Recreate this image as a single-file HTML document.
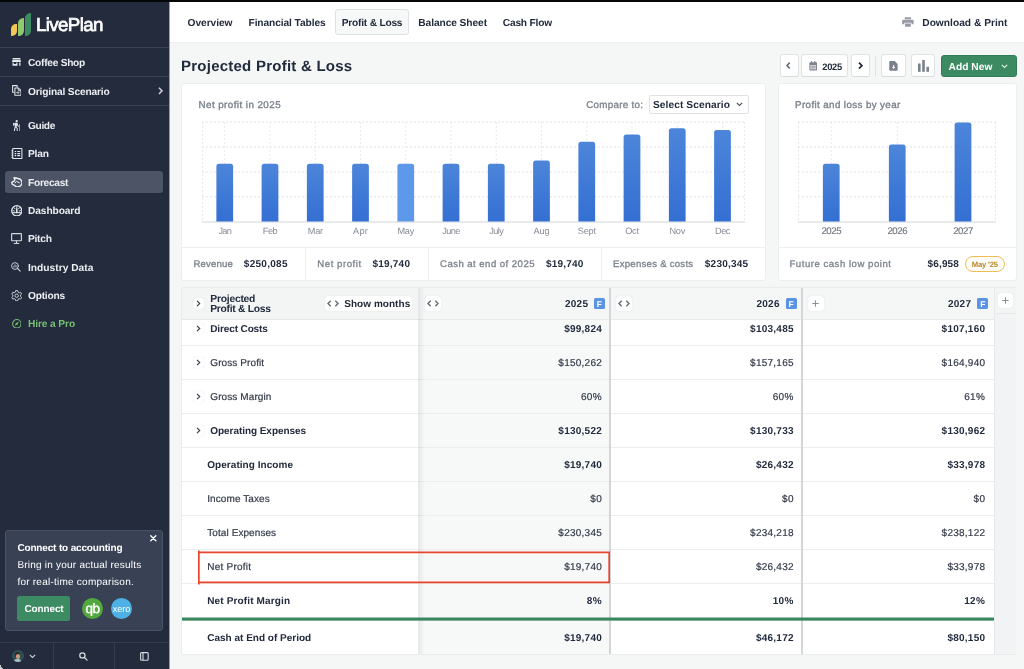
<!DOCTYPE html>
<html lang="en"><head>
<meta charset="utf-8">
<title>LivePlan - Projected Profit &amp; Loss</title>
<style>
*{box-sizing:border-box;margin:0;padding:0}
html,body{width:1024px;height:669px;overflow:hidden}
body{position:relative;background:#f5f7f7;font-family:"Liberation Sans",sans-serif;font-size:10px;color:#222b3d;text-rendering:geometricPrecision}
#app{position:absolute;left:0;top:0;width:1024px;height:669px;will-change:transform}
.a{position:absolute}
.t{position:absolute;white-space:pre;line-height:14px;height:14px;margin-top:-6px}
.b{font-weight:700}
.r{text-align:right}
.g{color:#7b828d;-webkit-text-stroke:0.3px #7b828d}
.w{color:#fff}
.sb{font-size:10.2px;color:#eceef2}
#topbar{left:0;top:0;width:1024px;height:2px;background:#050608}
#side{left:0;top:2px;width:169px;height:667px;background:#232b3d;border-right:0}
#side2{left:169px;top:2px;width:1px;height:667px;background:rgba(35,43,61,.45)}
#nav{left:169px;top:2px;width:855px;height:41px;background:#fff;border-bottom:1px solid #eceeef}
.sline{left:0;width:169px;height:1px;background:#3a4256}
.btn{position:absolute;background:#fff;border:1px solid #e0e3e5;border-radius:3px}
.card{position:absolute;background:#fff;border:1px solid #eceeef;border-radius:3px}
.hl{position:absolute;height:1px;background:#eceeef}
.vl{position:absolute;width:1px;background:#eceeef}
.mini{position:absolute;background:#fff;border-radius:3px;box-shadow:0 0 1px rgba(0,0,0,.18)}
</style>
</head>
<body>
<div id="app">
<div class="a" id="nav"></div>
<div class="a" id="side"></div>
<div class="a" id="side2"></div>
<div class="a" id="topbar"></div>
<!--SIDEBAR-START-->
<!-- logo -->
<div class="a" style="left:10.7px;top:24px;width:6px;height:11.6px;background:#f3c655;border-radius:5px 0 5px 0"></div>
<div class="a" style="left:17.7px;top:18px;width:6.2px;height:17.6px;background:#8fca6e;border-radius:5.5px 0 5.5px 0"></div>
<div class="a" style="left:24.9px;top:12.7px;width:6.2px;height:22.9px;background:#3c8a62;border-radius:5.5px 0 5.5px 0"></div>
<span class="t w" style="left: 36px; top: 24.8px; font-size: 18.7px; line-height: 24px; height: 24px; margin-top: -12px; -webkit-text-stroke: 0.7px rgb(255, 255, 255); letter-spacing: -0.61px;">LivePlan</span>
<div class="a sline" style="top:47px"></div>
<div class="a sline" style="top:76px"></div>
<div class="a sline" style="top:105px"></div>
<!-- company / scenario -->
<svg class="a" style="left:12.200px;top:58px" width="9" height="7.700" viewBox="0 0 9 7.700"><path fill="#e3e6ea" d="M0.600 0h7.800v1.100H0.600zM0.500 1.600h8L9 4H0zM0.500 4.400h1.200v1.700h2.600V4.400h1.200v3.300H0.500zM7.200 4.400h1.300v3.300H7.200z"></path></svg>
<span class="t b w sb" style="left: 28px; top: 62.5px; letter-spacing: -0.27px;">Coffee Shop</span>
<svg class="a" style="left:11.800px;top:85px" width="9.600" height="10.800" viewBox="0 0 9.600 10.800" fill="none" stroke="#e3e6ea" stroke-width="1.050" stroke-linejoin="round"><path d="M2.600 7.300H0.600V0.600h4.600v2"></path><path d="M2.900 3h3.600l2.500 2.500v4.700H2.900z"></path><path d="M6.300 3v2.700H9" stroke-width="0.900"></path><path d="M4.300 7.600h2.500M5.900 6.500L7 7.600 5.900 8.700" stroke-width="0.900"></path></svg>
<span class="t b w sb" style="left: 28px; top: 91.6px; letter-spacing: -0.17px;">Original Scenario</span>
<svg class="a" style="left:157.700px;top:86.800px" width="5" height="7.800" viewBox="0 0 6 10" fill="none" stroke="#c9cdd4" stroke-width="1.900"><path d="M1 1l4 4-4 4"></path></svg>
<!-- nav highlight -->
<div class="a" style="left:5px;top:171px;width:158px;height:22.4px;background:#4d5465;border-radius:3px"></div>
<!-- Guide (hiker) -->
<svg class="a" style="left:12.200px;top:120px" width="8.200" height="11" viewBox="0 0 8.200 11" fill="#e3e6ea"><circle cx="4.700" cy="1.150" r="1.150"></circle><path d="M3.300 2.800h2.300l0.500 2.500 1.100 0.900-0.500 0.700-1.500-1.100-0.200-0.800-0.400 1.900 1.100 1.300v2.800h-1v-2.400L3.600 7.400 2.900 11H1.800l1.200-5.800V4l-0.700 0.500v1.400H1.500V4z"></path><path d="M7.100 4.300h0.700V11h-0.700z" opacity="0.850"></path><path d="M0.900 3.300l1.400-0.500 0.300 2.300-1.300 0.500z"></path></svg>
<span class="t b w sb" style="left: 28px; top: 126.3px; letter-spacing: -0.37px;">Guide</span>
<!-- Plan (notebook) -->
<svg class="a" style="left:11px;top:148px" width="11.500" height="11.200" viewBox="0 0 11.500 11.200" fill="none" stroke="#e3e6ea" stroke-width="1.050"><rect x="1.700" y="0.550" width="9.200" height="10.100" rx="0.400"></rect><path d="M0.200 2.300h1.900M0.200 4.100h1.900M0.200 5.900h1.900M0.200 7.700h1.900M0.200 9.500h1.900" stroke-width="0.700"></path><path d="M3.700 3.500h1.500M3.700 5.600h1.500M3.700 7.700h1.500M6.300 3.500h2.800M6.300 5.600h2.800M6.300 7.700h2.800" stroke-width="1.150"></path></svg>
<span class="t b w sb" style="left: 28px; top: 154.1px; letter-spacing: -0.18px;">Plan</span>
<!-- Forecast (piggy bank) -->
<svg class="a" style="left:10.700px;top:176.800px" width="11.800" height="10.600" viewBox="0 0 11.800 10.600" fill="none" stroke="#eef0f3" stroke-width="1.400" stroke-linejoin="round" stroke-linecap="round"><path d="M3 0.800C4.500 0.600 5.600 1 6.800 1.550A4.150 4.150 0 1 1 3.600 8.350L1.300 7.400 0.800 5.300 3 4.200 3.900 2.800Z"></path><path d="M5.600 4.400l2.700 1.300" stroke-width="1"></path><circle cx="4.200" cy="5.400" r="0.300" stroke-width="0.700"></circle></svg>
<span class="t b w sb" style="left: 28px; top: 182.9px; letter-spacing: -0.28px;">Forecast</span>
<!-- Dashboard -->
<svg class="a" style="left:10.700px;top:204.500px" width="11.600" height="11.600" viewBox="0 0 11.600 11.600" fill="none" stroke="#e3e6ea" stroke-width="1.250"><circle cx="5.800" cy="5.800" r="5.100"></circle><path d="M1.300 7.700h9" stroke-width="1.100"></path><path d="M5.800 7.500V3.800" stroke-width="1.600" stroke-linecap="round"></path><path d="M5.800 1.700v0.900M3.200 2.800l0.900 1.100M8.400 2.800L7.500 3.900M2 5.600l1.300 0.400M9.600 5.600L8.300 6" stroke-width="1" stroke-linecap="round"></path></svg>
<span class="t b w sb" style="left: 28px; top: 211.3px; letter-spacing: -0.1px;">Dashboard</span>
<!-- Pitch (monitor) -->
<svg class="a" style="left:11px;top:233.200px" width="11" height="11.200" viewBox="0 0 11 11.200" fill="none" stroke="#d3d7dd" stroke-width="1.150" stroke-linejoin="round"><rect x="0.600" y="0.600" width="9.800" height="7.200" rx="0.500"></rect><path d="M5.500 7.900v2.300M3.200 10.500h4.600" stroke-linecap="round"></path></svg>
<span class="t b w sb" style="left: 28px; top: 239.2px; letter-spacing: -0.26px;">Pitch</span>
<!-- Industry Data (search chart) -->
<svg class="a" style="left:11.400px;top:262.400px" width="9.800" height="9.600" viewBox="0 0 9.800 9.600" fill="none" stroke="#c9cdd5" stroke-width="1" stroke-linecap="round"><circle cx="4" cy="4" r="3.400"></circle><path d="M6.500 6.500l2.700 2.600" stroke-width="1.100"></path><path d="M2.800 5V4.200M4 5V2.700M5.200 5V3.700" stroke-width="0.800"></path></svg>
<span class="t b w sb" style="left: 28px; top: 267.9px; letter-spacing: 0.02px;">Industry Data</span>
<!-- Options (gear) -->
<svg class="a" style="left:10.800px;top:289.700px" width="11.400" height="11.400" viewBox="0 0 11.400 11.400" fill="none" stroke="#c5c9d2" stroke-width="1" stroke-linejoin="round"><path d="M4.44 2.01 L4.67 0.60 L6.73 0.60 L6.96 2.01 L8.26 2.76 L9.60 2.26 L10.63 4.05 L9.53 4.95 L9.53 6.45 L10.63 7.35 L9.60 9.14 L8.26 8.64 L6.96 9.39 L6.73 10.80 L4.67 10.80 L4.44 9.39 L3.14 8.64 L1.80 9.14 L0.77 7.35 L1.87 6.45 L1.87 4.95 L0.77 4.05 L1.80 2.26 L3.14 2.76Z"></path><circle cx="5.700" cy="5.700" r="1.700"></circle></svg>
<span class="t b w sb" style="left: 28px; top: 296px; letter-spacing: -0.24px;">Options</span>
<!-- Hire a Pro (compass) -->
<svg class="a" style="left:11.700px;top:318.900px" width="9.600" height="9.600" viewBox="0 0 9.600 9.600" fill="none" stroke="#72bb6f" stroke-width="1.050"><circle cx="4.800" cy="4.800" r="4.200"></circle><path d="M6.800 2.800L5.600 5.600 2.800 6.800 4 4z" fill="#72bb6f" stroke="none"></path></svg>
<span class="t b" style="left: 28px; top: 324.2px; color: rgb(120, 192, 116); font-size: 10.2px; letter-spacing: -0.11px;">Hire a Pro</span>
<!-- Connect card -->
<div class="a" style="left:5px;top:530px;width:158px;height:100.500px;background:#394255;border:1px solid #4a5366;border-radius:3px"></div>
<svg class="a" style="left:150.400px;top:535.300px" width="6.600" height="6.600" viewBox="0 0 7 7" stroke="#fff" stroke-width="1.400" stroke-linecap="round"><path d="M0.800 0.800l5.400 5.400M6.200 0.800L0.800 6.200"></path></svg>
<span class="t b w" style="left: 17.4px; top: 548.4px; letter-spacing: -0.16px;">Connect to accounting</span>
<span class="t w" style="left: 17.4px; top: 565.4px; letter-spacing: 0.22px;">Bring in your actual results</span>
<span class="t w" style="left: 17.4px; top: 582.3px; letter-spacing: 0.24px;">for real-time comparison.</span>
<div class="a" style="left:17.200px;top:595.700px;width:53.300px;height:25.500px;background:#3d8b63;border-radius:2.500px"></div>
<span class="t b w" style="left: 24.5px; top: 609.3px; letter-spacing: -0.14px;">Connect</span>
<div class="a" style="left:82px;top:598px;width:21px;height:21px;border-radius:50%;background:#52a83c"></div>
<span class="t w" style="left:82px;top:607.600px;width:21px;text-align:center;font-size:13.500px;letter-spacing:-0.500px;-webkit-text-stroke:0.400px #fff">qb</span>
<div class="a" style="left:111px;top:598px;width:21px;height:21px;border-radius:50%;background:#4eb1e6"></div>
<span class="t w" style="left:110.500px;top:608.200px;width:22px;text-align:center;font-size:9.200px;letter-spacing:-0.150px">xero</span>
<!-- footer -->
<div class="a" style="left:0;top:642px;width:169px;height:1px;background:#333b4e"></div>
<div class="a" style="left:53px;top:642px;width:1px;height:27px;background:#333b4e"></div>
<div class="a" style="left:114px;top:642px;width:1px;height:27px;background:#333b4e"></div>
<div class="a" style="left:12px;top:650.300px;width:11.600px;height:11.600px;border-radius:50%;overflow:hidden;background:#2f4f55"><div class="a" style="left:2.300px;top:8.300px;width:7px;height:5px;border-radius:3px 3px 0 0;background:#a9c3c9"></div><div class="a" style="left:3.100px;top:1.600px;width:5.400px;height:5px;border-radius:2.700px;background:#2b2624"></div><div class="a" style="left:3.500px;top:3.400px;width:4.600px;height:5.200px;border-radius:2.300px;background:#c99a7c"></div></div>
<svg class="a" style="left:29px;top:654.300px" width="7" height="5" viewBox="0 0 7 5" fill="none" stroke="#cdd1d9" stroke-width="1.100"><path d="M0.800 0.800l2.700 2.700 2.700-2.700"></path></svg>
<svg class="a" style="left:79.300px;top:652.400px" width="8.800" height="8.800" viewBox="0 0 8.800 8.800" fill="none" stroke="#d9dce3" stroke-width="1.250" stroke-linecap="round"><circle cx="3.400" cy="3.400" r="2.600"></circle><path d="M5.500 5.500l2.600 2.600"></path></svg>
<svg class="a" style="left:139.900px;top:652.300px" width="8.800" height="8.800" viewBox="0 0 8.800 8.800" fill="none" stroke="#d9dce3" stroke-width="1.100"><rect x="0.600" y="0.600" width="7.600" height="7.600" rx="1"></rect><path d="M3 0.600v7.600"></path></svg>
<!-- window corner -->
<div class="a" style="left:0;top:664.500px;width:4.500px;height:4.500px;background:radial-gradient(circle at 100% 0,rgba(0,0,0,0) 0 3.800px,#c9cdd1 4.400px)"></div>
<!--SIDEBAR-END-->
<!--TOPNAV-START-->
<div class="a" style="left:335px;top:9px;width:74px;height:25.500px;background:#f7f8f8;border:1px solid #dde1e3;border-radius:3px"></div>
<span class="t b" style="left: 187.5px; top: 23px; font-size: 10.2px; letter-spacing: -0.04px;">Overview</span>
<span class="t b" style="left: 248.5px; top: 23px; font-size: 10.2px; letter-spacing: -0.09px;">Financial Tables</span>
<span class="t b" style="left: 341.75px; top: 23px; font-size: 10.2px; letter-spacing: -0.22px;">Profit &amp; Loss</span>
<span class="t b" style="left: 418.25px; top: 23px; font-size: 10.2px; letter-spacing: -0.07px;">Balance Sheet</span>
<span class="t b" style="left: 502.75px; top: 23px; font-size: 10.2px; letter-spacing: -0.19px;">Cash Flow</span>
<svg class="a" style="left:901.800px;top:17px" width="11.800" height="10" viewBox="0 0 13 11" fill="#959ba4"><path d="M3 0.300h7v2.200H3z"></path><path d="M1.400 3h10.200c0.700 0 1.200 0.500 1.200 1.200v3.900h-2.300V6.300H2.500v1.800H0.200V4.200C0.200 3.500 0.700 3 1.400 3z"></path><path d="M3.400 7.100h6.200v3.600H3.400z"></path></svg>
<span class="t b" style="left: 922.25px; top: 23px; font-size: 10.2px; letter-spacing: 0.02px;">Download &amp; Print</span>
<!--TOPNAV-END-->
<!--HEADER-START-->
<span class="t b" style="left: 181px; top: 65.7px; font-size: 15px; line-height: 20px; height: 20px; margin-top: -9px; letter-spacing: 0.24px;">Projected Profit &amp; Loss</span>
<div class="btn" style="left:780px;top:54px;width:18.500px;height:23px;border-bottom-color:#d6dadd"></div>
<svg class="a" style="left:786.400px;top:62.400px" width="4.700" height="7" viewBox="0 0 6 9" fill="none" stroke="#5d6470" stroke-width="1.900"><path d="M4.800 0.800L1.200 4.500l3.600 3.700"></path></svg>
<div class="btn" style="left:801px;top:54px;width:47px;height:23px;border-bottom-color:#d6dadd"></div>
<svg class="a" style="left:809px;top:61.400px" width="8.400" height="9.400" viewBox="0 0 8.400 9.400"><path fill="#7f858f" d="M1.400 1.200h5.600c0.600 0 1 0.400 1 1v6.200c0 0.600-0.400 1-1 1H1.400c-0.600 0-1-0.400-1-1V2.200c0-0.600 0.400-1 1-1z"></path><path fill="#7f858f" d="M2 0h1.100v1.800H2zM5.300 0h1.100v1.800H5.300z"></path><path fill="#dfe1e5" d="M1.400 4h5.600v4.400H1.400z"></path><path stroke="#8e949d" stroke-width="0.500" fill="none" d="M3.270 4v4.400M5.130 4v4.400M1.400 5.500h5.600M1.400 6.950h5.600"></path></svg>
<span class="t b" style="left: 822.2px; top: 66px; font-size: 9.4px; letter-spacing: -0.26px;">2025</span>
<div class="btn" style="left:851px;top:54px;width:18.500px;height:23px;border-bottom-color:#d6dadd"></div>
<svg class="a" style="left:857.700px;top:62.200px" width="4.900" height="7.300" viewBox="0 0 6 9" fill="none" stroke="#222b3d" stroke-width="2.100"><path d="M1.200 0.800l3.600 3.700-3.600 3.700"></path></svg>
<div class="a" style="left:875px;top:55.500px;width:1px;height:20.500px;background:#dfe2e4"></div>
<div class="btn" style="left:881px;top:54px;width:24.500px;height:23px;border-bottom-color:#d6dadd"></div>
<svg class="a" style="left:888.800px;top:60.200px" width="9.300" height="11.700" viewBox="0 0 10 11"><path fill="#7b818b" d="M1.200 0.300h4.900l3.200 3.200v6.400c0 0.500-0.400 0.900-0.900 0.900H1.200c-0.500 0-0.900-0.400-0.900-0.900V1.200c0-0.500 0.400-0.900 0.900-0.900z"></path><path fill="#fff" d="M4.400 4.600h1.200v2.300h1.300L5 9 3.100 6.900h1.300z"></path></svg>
<div class="btn" style="left:911px;top:54px;width:24px;height:23px;border-bottom-color:#d6dadd"></div>
<svg class="a" style="left:917.500px;top:59.500px" width="11" height="12" viewBox="0 0 11 12" fill="#7b818b"><rect x="0" y="3.500" width="2.600" height="8.300"></rect><rect x="4.200" y="0" width="2.600" height="11.800"></rect><rect x="8.400" y="6.800" width="2.600" height="5"></rect></svg>
<div class="a" style="left:941px;top:54.500px;width:75.750px;height:22.500px;background:#3c8a62;border:1px solid #337b56;border-radius:3px"></div>
<span class="t b w" style="left: 948.5px; top: 66.9px; font-size: 10.2px; letter-spacing: 0.06px;">Add New</span>
<svg class="a" style="left:1000.500px;top:64px" width="7" height="5" viewBox="0 0 7 5" fill="none" stroke="#e6f1eb" stroke-width="1.100"><path d="M0.800 0.800l2.700 2.700 2.700-2.700"></path></svg>
<!--HEADER-END-->
<!--CARD1-START-->
<div class="card" style="left:778px;top:83px;width:238.500px;height:198px"></div>
<span class="t" style="left: 795px; top: 105px; font-size: 9.8px; color: rgb(122, 129, 140); -webkit-text-stroke: 0.35px rgb(122, 129, 140); letter-spacing: 0.38px;">Profit and loss by year</span>
<div class="hl" style="left:779px;top:246.500px;width:236.500px"></div>
<span class="t g" style="left: 789.5px; top: 263.9px; font-size: 9.6px; letter-spacing: 0.51px;">Future cash low point</span>
<span class="t b" style="left: 927.6px; top: 263.7px; font-size: 10px; letter-spacing: 0.13px;">$6,958</span>
<div class="a" style="left:965.100px;top:256.400px;width:39.600px;height:15.600px;border:1px solid #f0bd55;border-radius:8px;background:#fffdf7"></div>
<span class="t b" style="left: 971.8px; top: 263.8px; font-size: 7.6px; color: rgb(181, 133, 44); letter-spacing: -0.16px;">May '25</span>
<!--CARD1-END-->
<!--CARD2-START-->
<div class="card" style="left:181px;top:83px;width:584.500px;height:198px"></div>
<span class="t" style="left: 198.5px; top: 105px; font-size: 9.8px; color: rgb(122, 129, 140); -webkit-text-stroke: 0.35px rgb(122, 129, 140); letter-spacing: 0.44px;">Net profit in 2025</span>
<span class="t g" style="left: 586.25px; top: 105px; font-size: 9.8px; letter-spacing: 0.28px;">Compare to:</span>
<div class="a" style="left:649px;top:95px;width:99.500px;height:18.500px;background:#fff;border:1px solid #dfe2e4;border-radius:2px"></div>
<span class="t b" style="left: 653px; top: 105px; font-size: 10.2px; letter-spacing: 0.07px;">Select Scenario</span>
<svg class="a" style="left:736px;top:102px" width="7" height="5" viewBox="0 0 7 5" fill="none" stroke="#4a515d" stroke-width="1.100"><path d="M0.800 0.800l2.700 2.700 2.700-2.700"></path></svg>
<svg class="a" style="left:0;top:0" width="1024" height="300" viewBox="0 0 1024 300"><defs><linearGradient id="bg" x1="0" y1="0" x2="0" y2="1"><stop offset="0" stop-color="#4c85d9"></stop><stop offset="1" stop-color="#346fd3"></stop></linearGradient></defs><g stroke="#e0e3e6" stroke-width="1" stroke-dasharray="2 2" fill="none"><path d="M202 122H745"></path><path d="M798 122H996"></path><path d="M202 147H745"></path><path d="M798 147H996"></path><path d="M202 172H745"></path><path d="M798 172H996"></path><path d="M202 196.8H745"></path><path d="M798 196.8H996"></path><path stroke="#e7e9ec" d="M202.5 122V221.5"></path><path stroke="#e7e9ec" d="M224.75 122V221.5"></path><path stroke="#e7e9ec" d="M270 122V221.5"></path><path stroke="#e7e9ec" d="M315.25 122V221.5"></path><path stroke="#e7e9ec" d="M360.5 122V221.5"></path><path stroke="#e7e9ec" d="M405.75 122V221.5"></path><path stroke="#e7e9ec" d="M451 122V221.5"></path><path stroke="#e7e9ec" d="M496.25 122V221.5"></path><path stroke="#e7e9ec" d="M541.5 122V221.5"></path><path stroke="#e7e9ec" d="M586.75 122V221.5"></path><path stroke="#e7e9ec" d="M632 122V221.5"></path><path stroke="#e7e9ec" d="M677.25 122V221.5"></path><path stroke="#e7e9ec" d="M722.5 122V221.5"></path><path stroke="#e7e9ec" d="M744.5 122V221.5"></path><path stroke="#e7e9ec" d="M798.5 122V221.5"></path><path stroke="#e7e9ec" d="M831.25 122V221.5"></path><path stroke="#e7e9ec" d="M897.25 122V221.5"></path><path stroke="#e7e9ec" d="M963 122V221.5"></path><path stroke="#e7e9ec" d="M995.5 122V221.5"></path></g><path d="M202 222H745 M798 222H996" stroke="#d3d6da" stroke-width="1.200" fill="none"></path><path fill="url(#bg)" d="M216.38 221.6V166.4Q216.38 163.8 218.97 163.8H230.53Q233.12 163.8 233.12 166.4V221.6Z"></path><path fill="url(#bg)" d="M261.62 221.6V166.4Q261.62 163.8 264.23 163.8H275.77Q278.38 163.8 278.38 166.4V221.6Z"></path><path fill="url(#bg)" d="M306.88 221.6V166.4Q306.88 163.8 309.48 163.8H321.02Q323.62 163.8 323.62 166.4V221.6Z"></path><path fill="url(#bg)" d="M352.12 221.6V166.4Q352.12 163.8 354.73 163.8H366.27Q368.88 163.8 368.88 166.4V221.6Z"></path><path fill="#5e98e8" d="M397.38 221.6V166.4Q397.38 163.8 399.98 163.8H411.52Q414.12 163.8 414.12 166.4V221.6Z"></path><path fill="url(#bg)" d="M442.62 221.6V166.4Q442.62 163.8 445.23 163.8H456.77Q459.38 163.8 459.38 166.4V221.6Z"></path><path fill="url(#bg)" d="M487.88 221.6V166.4Q487.88 163.8 490.48 163.8H502.02Q504.62 163.8 504.62 166.4V221.6Z"></path><path fill="url(#bg)" d="M533.12 221.6V163.1Q533.12 160.5 535.73 160.5H547.27Q549.88 160.5 549.88 163.1V221.6Z"></path><path fill="url(#bg)" d="M578.38 221.6V144.35Q578.38 141.75 580.98 141.75H592.52Q595.12 141.75 595.12 144.35V221.6Z"></path><path fill="url(#bg)" d="M623.62 221.6V137.1Q623.62 134.5 626.23 134.5H637.77Q640.38 134.5 640.38 137.1V221.6Z"></path><path fill="url(#bg)" d="M668.88 221.6V130.85Q668.88 128.25 671.48 128.25H683.02Q685.62 128.25 685.62 130.85V221.6Z"></path><path fill="url(#bg)" d="M714.12 221.6V132.6Q714.12 130 716.73 130H728.27Q730.88 130 730.88 132.6V221.6Z"></path><path fill="url(#bg)" d="M822.88 221.6V166.4Q822.88 163.8 825.48 163.8H837.02Q839.62 163.8 839.62 166.4V221.6Z"></path><path fill="url(#bg)" d="M888.88 221.6V147.1Q888.88 144.5 891.48 144.5H903.02Q905.62 144.5 905.62 147.1V221.6Z"></path><path fill="url(#bg)" d="M954.62 221.6V125Q954.62 122.4 957.23 122.4H968.77Q971.38 122.4 971.38 125V221.6Z"></path></svg>
<span class="t" style="left: 204.75px; top: 229.7px; width: 40px; text-align: center; font-size: 9.2px; color: rgb(134, 140, 150); letter-spacing: -0.74px;">Jan</span>
<span class="t" style="left: 250px; top: 229.7px; width: 40px; text-align: center; font-size: 9.2px; color: rgb(134, 140, 150); letter-spacing: -0.45px;">Feb</span>
<span class="t" style="left: 295.25px; top: 229.7px; width: 40px; text-align: center; font-size: 9.2px; color: rgb(134, 140, 150); letter-spacing: -0.34px;">Mar</span>
<span class="t" style="left: 340.5px; top: 229.7px; width: 40px; text-align: center; font-size: 9.2px; color: rgb(134, 140, 150); letter-spacing: 0.16px;">Apr</span>
<span class="t" style="left: 385.75px; top: 229.7px; width: 40px; text-align: center; font-size: 9.2px; color: rgb(134, 140, 150); letter-spacing: -0.22px;">May</span>
<span class="t" style="left: 431px; top: 229.7px; width: 40px; text-align: center; font-size: 9.2px; color: rgb(134, 140, 150); letter-spacing: -0.58px;">June</span>
<span class="t" style="left: 476.25px; top: 229.7px; width: 40px; text-align: center; font-size: 9.2px; color: rgb(134, 140, 150); letter-spacing: -0.59px;">July</span>
<span class="t" style="left: 521.5px; top: 229.7px; width: 40px; text-align: center; font-size: 9.2px; color: rgb(134, 140, 150); letter-spacing: -0.05px;">Aug</span>
<span class="t" style="left: 566.75px; top: 229.7px; width: 40px; text-align: center; font-size: 9.2px; color: rgb(134, 140, 150); letter-spacing: -0.25px;">Sept</span>
<span class="t" style="left: 612px; top: 229.7px; width: 40px; text-align: center; font-size: 9.2px; color: rgb(134, 140, 150); letter-spacing: -0.2px;">Oct</span>
<span class="t" style="left: 657.25px; top: 229.7px; width: 40px; text-align: center; font-size: 9.2px; color: rgb(134, 140, 150); letter-spacing: -0.28px;">Nov</span>
<span class="t" style="left: 702.5px; top: 229.7px; width: 40px; text-align: center; font-size: 9.2px; color: rgb(134, 140, 150); letter-spacing: -0.41px;">Dec</span>
<span class="t" style="left: 811.25px; top: 230.6px; width: 40px; text-align: center; font-size: 9.6px; color: rgb(112, 118, 127); -webkit-text-stroke: 0.15px rgb(112, 118, 127); letter-spacing: -0.44px;">2025</span>
<span class="t" style="left: 877.25px; top: 230.6px; width: 40px; text-align: center; font-size: 9.6px; color: rgb(112, 118, 127); -webkit-text-stroke: 0.15px rgb(112, 118, 127); letter-spacing: -0.44px;">2026</span>
<span class="t" style="left: 943px; top: 230.6px; width: 40px; text-align: center; font-size: 9.6px; color: rgb(112, 118, 127); -webkit-text-stroke: 0.15px rgb(112, 118, 127); letter-spacing: -0.44px;">2027</span>
<div class="hl" style="left:182px;top:246.500px;width:582.500px"></div>
<div class="vl" style="left:305px;top:247px;height:33.500px"></div>
<div class="vl" style="left:428px;top:247px;height:33.500px"></div>
<div class="vl" style="left:601px;top:247px;height:33.500px"></div>
<span class="t g" style="left: 193.5px; top: 263.9px; font-size: 9.6px; letter-spacing: 0.16px;">Revenue</span>
<span class="t b" style="left: 243.8px; top: 263.7px; font-size: 10px; letter-spacing: 0.29px;">$250,085</span>
<span class="t g" style="left: 317.3px; top: 263.9px; font-size: 9.6px; letter-spacing: 0.55px;">Net profit</span>
<span class="t b" style="left: 372.5px; top: 263.7px; font-size: 10px; letter-spacing: 0.22px;">$19,740</span>
<span class="t g" style="left: 440px; top: 263.9px; font-size: 9.6px; letter-spacing: 0.45px;">Cash at end of 2025</span>
<span class="t b" style="left: 545.9px; top: 263.7px; font-size: 10px; letter-spacing: 0.21px;">$19,740</span>
<span class="t g" style="left: 613px; top: 263.9px; font-size: 9.6px; letter-spacing: 0.26px;">Expenses &amp; costs</span>
<span class="t b" style="left: 704.8px; top: 263.7px; font-size: 10px; letter-spacing: 0.24px;">$230,345</span>
<!--CARD2-END-->
<!--TABLE-START-->
<div class="a" style="left:181.5px;top:287.5px;width:812.5px;height:366.5px;background:#fff"></div>
<div class="a" style="left:418px;top:287.5px;width:191.5px;height:366.5px;background:#f7f9f9"></div>
<div class="a" style="left:181.5px;top:287.5px;width:236.5px;height:32px;background:#f3f5f5"></div>
<div class="a" style="left:418px;top:287.5px;width:576px;height:32px;background:#f5f7f7"></div>
<div class="a" style="left:994px;top:287.5px;width:22px;height:366.5px;background:#f1f3f4;border-left:1px solid #e6e9ea"></div>
<div class="a" style="left:995px;top:287.5px;width:21px;height:26.500px;background:#f3f5f5;border-bottom:1px solid #e6e9ea"></div>
<div class="hl" style="left:181.5px;top:287px;width:834.5px;background:#e9eced"></div>
<div class="vl" style="left:181px;top:287.5px;height:366.5px;background:#e9eced"></div>
<div class="hl" style="left:181.5px;top:319px;width:812.5px;background:#e6e9ea"></div>
<div class="hl" style="left:181.5px;top:345px;width:812.5px;background:#ebedee"></div>
<div class="hl" style="left:181.5px;top:379px;width:812.5px;background:#ebedee"></div>
<div class="hl" style="left:181.5px;top:413px;width:812.5px;background:#ebedee"></div>
<div class="hl" style="left:181.5px;top:447px;width:812.5px;background:#ebedee"></div>
<div class="hl" style="left:181.5px;top:481px;width:812.5px;background:#ebedee"></div>
<div class="hl" style="left:181.5px;top:515px;width:812.5px;background:#ebedee"></div>
<div class="hl" style="left:181.5px;top:549px;width:812.5px;background:#ebedee"></div>
<div class="hl" style="left:181.5px;top:583px;width:812.5px;background:#ebedee"></div>
<div class="hl" style="left:181.5px;top:653.5px;width:834.5px;background:#e9eced"></div>
<div class="a" style="left:418px;top:287.5px;width:7px;height:366.5px;background:linear-gradient(90deg,rgba(80,90,100,.11),rgba(80,90,100,0))"></div>
<div class="a" style="left:609px;top:287.5px;width:1.500px;height:366.5px;background:#d2d5da"></div>
<div class="a" style="left:801px;top:287.5px;width:1.500px;height:366.5px;background:#d2d5da"></div>
<div class="a" style="left:181.5px;top:617px;width:812.5px;height:4px;background:linear-gradient(to bottom,rgba(58,135,95,.5) 0 1px,#3a875f 1px 3px,rgba(58,135,95,.65) 3px 4px)"></div>
<div class="mini" style="left:193px;top:298px;width:11px;height:11px"></div>
<svg class="a" style="left:196px;top:300px" width="5" height="7" viewBox="0 0 5 7" fill="none" stroke="#3a4250" stroke-width="1.200"><path d="M1 0.800l2.700 2.700L1 6.200"></path></svg>
<span class="t b" style="left: 210.25px; top: 298.6px; font-size: 10.3px; line-height: 10px; height: 10px; margin-top: -4px; letter-spacing: -0.22px;">Projected</span>
<span class="t b" style="left: 210.25px; top: 308.7px; font-size: 10.3px; line-height: 10px; height: 10px; margin-top: -4px; letter-spacing: -0.28px;">Profit &amp; Loss</span>
<div class="mini" style="left:325.25px;top:296.25px;width:87px;height:15px"></div>
<svg class="a" style="left:327.2px;top:300.2px" width="12" height="7" viewBox="0 0 12 7" fill="none" stroke="#656c78" stroke-width="1.400"><path d="M3.700 0.800L1 3.500l2.700 2.700M8.300 0.800L11 3.500 8.300 6.200"></path></svg>
<span class="t b" style="left: 344.25px; top: 304px; letter-spacing: 0.04px;">Show months</span>
<div class="mini" style="left:425px;top:296.25px;width:15.5px;height:15px"></div>
<svg class="a" style="left:426.7px;top:300.2px" width="12" height="7" viewBox="0 0 12 7" fill="none" stroke="#656c78" stroke-width="1.400"><path d="M3.700 0.800L1 3.500l2.700 2.700M8.300 0.800L11 3.500 8.300 6.200"></path></svg>
<div class="mini" style="left:616.25px;top:296.25px;width:15.5px;height:15px"></div>
<svg class="a" style="left:618px;top:300.2px" width="12" height="7" viewBox="0 0 12 7" fill="none" stroke="#656c78" stroke-width="1.400"><path d="M3.700 0.800L1 3.500l2.700 2.700M8.300 0.800L11 3.500 8.300 6.200"></path></svg>
<div class="mini" style="left:808px;top:296.25px;width:15.75px;height:15px"></div>
<svg class="a" style="left:812.4px;top:300.2px" width="7" height="7" viewBox="0 0 7 7" fill="none" stroke="#8a9099" stroke-width="1"><path d="M3.500 0.300v6.400M0.300 3.500h6.400"></path></svg>
<div class="mini" style="left:997.5px;top:293.25px;width:15.5px;height:14.5px"></div>
<svg class="a" style="left:1001.7px;top:297px" width="7" height="7" viewBox="0 0 7 7" fill="none" stroke="#8a9099" stroke-width="1"><path d="M3.500 0.300v6.400M0.300 3.500h6.400"></path></svg>
<span class="t b" style="left: 565px; top: 304px; letter-spacing: 0.24px;">2025</span>
<div class="a" style="left:593.75px;top:298.250px;width:11px;height:10.500px;background:#5b93e6;border-radius:1.500px"></div><span class="t b w" style="left:593.75px;top:302.900px;width:11px;text-align:center;font-size:8.400px">F</span>
<span class="t b" style="left: 756.5px; top: 304px; letter-spacing: 0.24px;">2026</span>
<div class="a" style="left:785.5px;top:298.250px;width:11px;height:10.500px;background:#5b93e6;border-radius:1.500px"></div><span class="t b w" style="left:785.5px;top:302.900px;width:11px;text-align:center;font-size:8.400px">F</span>
<span class="t b" style="left: 948px; top: 304px; letter-spacing: 0.24px;">2027</span>
<div class="a" style="left:977.25px;top:298.250px;width:11px;height:10.500px;background:#5b93e6;border-radius:1.500px"></div><span class="t b w" style="left:977.25px;top:302.900px;width:11px;text-align:center;font-size:8.400px">F</span>
<div class="mini" style="left:193px;top:323.25px;width:11px;height:11px"></div>
<svg class="a" style="left:196px;top:325.25px" width="5" height="7" viewBox="0 0 5 7" fill="none" stroke="#3a4250" stroke-width="1.200"><path d="M1 0.800l2.700 2.700L1 6.200"></path></svg>
<span class="t b" style="left: 210.25px; top: 329.25px; letter-spacing: -0.12px;">Direct Costs</span>
<span class="t b" style="left: 522px; top: 329.25px; width: 80px; text-align: right; letter-spacing: 0.23px;">$99,824</span>
<span class="t b" style="left: 713.75px; top: 329.25px; width: 80px; text-align: right; letter-spacing: 0.24px;">$103,485</span>
<span class="t b" style="left: 905.25px; top: 329.25px; width: 80px; text-align: right; letter-spacing: 0.24px;">$107,160</span>
<div class="mini" style="left:193px;top:357.25px;width:11px;height:11px"></div>
<svg class="a" style="left:196px;top:359.25px" width="5" height="7" viewBox="0 0 5 7" fill="none" stroke="#3a4250" stroke-width="1.200"><path d="M1 0.800l2.700 2.700L1 6.200"></path></svg>
<span class="t" style="left: 210.25px; top: 363.25px; color: rgb(51, 59, 73); -webkit-text-stroke: 0.2px rgb(51, 59, 73); letter-spacing: 0.1px;">Gross Profit</span>
<span class="t" style="left: 522px; top: 363.25px; width: 80px; text-align: right; color: rgb(51, 59, 73); -webkit-text-stroke: 0.2px rgb(51, 59, 73); letter-spacing: 0.24px;">$150,262</span>
<span class="t" style="left: 713.75px; top: 363.25px; width: 80px; text-align: right; color: rgb(51, 59, 73); -webkit-text-stroke: 0.2px rgb(51, 59, 73); letter-spacing: 0.24px;">$157,165</span>
<span class="t" style="left: 905.25px; top: 363.25px; width: 80px; text-align: right; color: rgb(51, 59, 73); -webkit-text-stroke: 0.2px rgb(51, 59, 73); letter-spacing: 0.24px;">$164,940</span>
<div class="mini" style="left:193px;top:391.25px;width:11px;height:11px"></div>
<svg class="a" style="left:196px;top:393.25px" width="5" height="7" viewBox="0 0 5 7" fill="none" stroke="#3a4250" stroke-width="1.200"><path d="M1 0.800l2.700 2.700L1 6.200"></path></svg>
<span class="t" style="left: 210.25px; top: 397.25px; color: rgb(51, 59, 73); -webkit-text-stroke: 0.2px rgb(51, 59, 73); letter-spacing: 0.1px;">Gross Margin</span>
<span class="t" style="left: 522px; top: 397.25px; width: 80px; text-align: right; color: rgb(51, 59, 73); -webkit-text-stroke: 0.2px rgb(51, 59, 73); letter-spacing: 0.36px;">60%</span>
<span class="t" style="left: 713.75px; top: 397.25px; width: 80px; text-align: right; color: rgb(51, 59, 73); -webkit-text-stroke: 0.2px rgb(51, 59, 73); letter-spacing: 0.36px;">60%</span>
<span class="t" style="left: 905.25px; top: 397.25px; width: 80px; text-align: right; color: rgb(51, 59, 73); -webkit-text-stroke: 0.2px rgb(51, 59, 73); letter-spacing: 0.36px;">61%</span>
<div class="mini" style="left:193px;top:425.25px;width:11px;height:11px"></div>
<svg class="a" style="left:196px;top:427.25px" width="5" height="7" viewBox="0 0 5 7" fill="none" stroke="#3a4250" stroke-width="1.200"><path d="M1 0.800l2.700 2.700L1 6.200"></path></svg>
<span class="t b" style="left: 210.25px; top: 431.25px; letter-spacing: -0.05px;">Operating Expenses</span>
<span class="t b" style="left: 522px; top: 431.25px; width: 80px; text-align: right; letter-spacing: 0.24px;">$130,522</span>
<span class="t b" style="left: 713.75px; top: 431.25px; width: 80px; text-align: right; letter-spacing: 0.24px;">$130,733</span>
<span class="t b" style="left: 905.25px; top: 431.25px; width: 80px; text-align: right; letter-spacing: 0.24px;">$130,962</span>
<span class="t b" style="left: 207.25px; top: 465.25px; letter-spacing: 0.05px;">Operating Income</span>
<span class="t b" style="left: 522px; top: 465.25px; width: 80px; text-align: right; letter-spacing: 0.23px;">$19,740</span>
<span class="t b" style="left: 713.75px; top: 465.25px; width: 80px; text-align: right; letter-spacing: 0.23px;">$26,432</span>
<span class="t b" style="left: 905.25px; top: 465.25px; width: 80px; text-align: right; letter-spacing: 0.23px;">$33,978</span>
<span class="t" style="left: 207.25px; top: 499.25px; color: rgb(51, 59, 73); -webkit-text-stroke: 0.2px rgb(51, 59, 73); letter-spacing: 0.08px;">Income Taxes</span>
<span class="t" style="left: 522px; top: 499.25px; width: 80px; text-align: right; color: rgb(51, 59, 73); -webkit-text-stroke: 0.2px rgb(51, 59, 73); letter-spacing: 0.29px;">$0</span>
<span class="t" style="left: 713.75px; top: 499.25px; width: 80px; text-align: right; color: rgb(51, 59, 73); -webkit-text-stroke: 0.2px rgb(51, 59, 73); letter-spacing: 0.29px;">$0</span>
<span class="t" style="left: 905.25px; top: 499.25px; width: 80px; text-align: right; color: rgb(51, 59, 73); -webkit-text-stroke: 0.2px rgb(51, 59, 73); letter-spacing: 0.29px;">$0</span>
<span class="t" style="left: 207.25px; top: 533.25px; color: rgb(51, 59, 73); -webkit-text-stroke: 0.2px rgb(51, 59, 73); letter-spacing: 0.08px;">Total Expenses</span>
<span class="t" style="left: 522px; top: 533.25px; width: 80px; text-align: right; color: rgb(51, 59, 73); -webkit-text-stroke: 0.2px rgb(51, 59, 73); letter-spacing: 0.24px;">$230,345</span>
<span class="t" style="left: 713.75px; top: 533.25px; width: 80px; text-align: right; color: rgb(51, 59, 73); -webkit-text-stroke: 0.2px rgb(51, 59, 73); letter-spacing: 0.24px;">$234,218</span>
<span class="t" style="left: 905.25px; top: 533.25px; width: 80px; text-align: right; color: rgb(51, 59, 73); -webkit-text-stroke: 0.2px rgb(51, 59, 73); letter-spacing: 0.24px;">$238,122</span>
<span class="t" style="left: 207.25px; top: 567px; color: rgb(51, 59, 73); -webkit-text-stroke: 0.2px rgb(51, 59, 73); letter-spacing: 0.23px;">Net Profit</span>
<span class="t" style="left: 522px; top: 567px; width: 80px; text-align: right; color: rgb(51, 59, 73); -webkit-text-stroke: 0.2px rgb(51, 59, 73); letter-spacing: 0.23px;">$19,740</span>
<span class="t" style="left: 713.75px; top: 567px; width: 80px; text-align: right; color: rgb(51, 59, 73); -webkit-text-stroke: 0.2px rgb(51, 59, 73); letter-spacing: 0.23px;">$26,432</span>
<span class="t" style="left: 905.25px; top: 567px; width: 80px; text-align: right; color: rgb(51, 59, 73); -webkit-text-stroke: 0.2px rgb(51, 59, 73); letter-spacing: 0.23px;">$33,978</span>
<span class="t b" style="left: 207.25px; top: 601.25px; letter-spacing: 0.14px;">Net Profit Margin</span>
<span class="t b" style="left: 522px; top: 601.25px; width: 80px; text-align: right; letter-spacing: 0.37px;">8%</span>
<span class="t b" style="left: 713.75px; top: 601.25px; width: 80px; text-align: right; letter-spacing: 0.36px;">10%</span>
<span class="t b" style="left: 905.25px; top: 601.25px; width: 80px; text-align: right; letter-spacing: 0.36px;">12%</span>
<span class="t b" style="left: 207.25px; top: 638.1px;">Cash at End of Period</span>
<span class="t b" style="left: 522px; top: 638.1px; width: 80px; text-align: right; letter-spacing: 0.23px;">$19,740</span>
<span class="t b" style="left: 713.75px; top: 638.1px; width: 80px; text-align: right; letter-spacing: 0.23px;">$46,172</span>
<span class="t b" style="left: 905.25px; top: 638.1px; width: 80px; text-align: right; letter-spacing: 0.23px;">$80,150</span>
<svg class="a" style="left:190px;top:545px" width="430" height="45" viewBox="0 0 430 45" fill="none" stroke="#e8452b" stroke-width="1.700"><path d="M8.850 5.500V39.500"></path><path d="M8.850 7.350H419.200V37.400H8.850"></path></svg>
<!--TABLE-END-->
</div>


</body></html>
